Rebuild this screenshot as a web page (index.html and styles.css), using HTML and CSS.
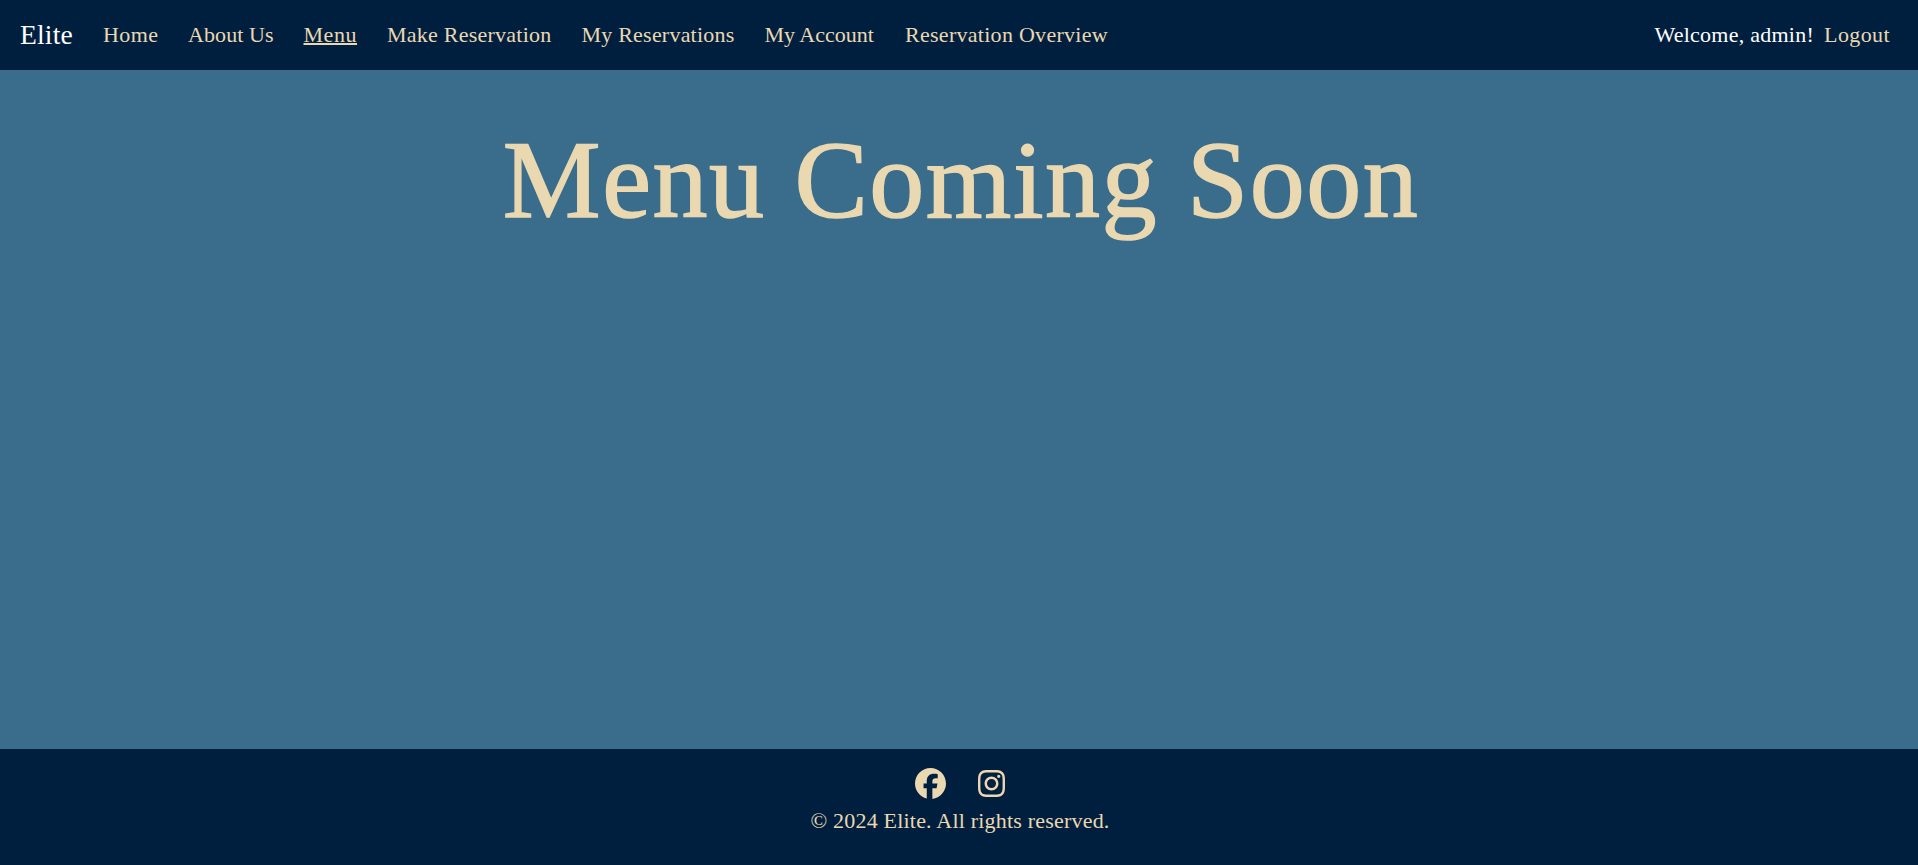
FILE: index.html
```html
<!DOCTYPE html>
<html lang="en">
<head>
<meta charset="utf-8">
<title>Elite - Menu</title>
<link rel="stylesheet" href="styles.css">
</head>
<body>
<header class="navbar">
  <a class="brand">Elite</a>
  <nav class="links">
    <a class="link home">Home</a>
    <a class="link about">About Us</a>
    <a class="link menu active">Menu</a>
    <a class="link make">Make Reservation</a>
    <a class="link mine">My Reservations</a>
    <a class="link account">My Account</a>
    <a class="link overview">Reservation Overview</a>
  </nav>
  <div class="user">
    <span class="welcome">Welcome, admin!</span>
    <a class="logout">Logout</a>
  </div>
</header>
<main class="content">
  <h1 class="title">Menu Coming Soon</h1>
</main>
<footer class="footer">
  <div class="social">
    <svg class="facebook" viewBox="0 0 512 512"><path d="M512 256C512 114.6 397.4 0 256 0S0 114.6 0 256C0 376 82.7 476.8 194.2 504.5V334.2H141.4V256h52.8V222.3c0-87.1 39.4-127.5 125-127.5c16.2 0 44.2 3.2 55.7 6.4V172c-6-.6-16.5-1-29.6-1c-42 0-58.2 15.9-58.2 57.2V256h83.6l-14.4 78.2H287V510.1C413.8 494.8 512 386.9 512 256z"/></svg>
    <svg class="instagram" viewBox="0 32 448 448"><path d="M224.1 141c-63.600 0-114.900 51.300-114.900 114.900s51.300 114.900 114.900 114.900S339 319.500 339 255.900 287.700 141 224.100 141zm0 189.600c-41.100 0-74.700-33.500-74.700-74.700s33.500-74.700 74.700-74.700 74.700 33.500 74.700 74.700-33.600 74.700-74.700 74.700zm146.400-194.300c0 14.900-12 26.800-26.800 26.800-14.900 0-26.800-12-26.800-26.800s12-26.800 26.800-26.800 26.800 12 26.800 26.800zm76.100 27.200c-1.700-35.900-9.900-67.700-36.200-93.900-26.200-26.200-58-34.400-93.900-36.200-37-2.100-147.900-2.100-184.900 0-35.800 1.700-67.600 9.900-93.900 36.100s-34.400 58-36.200 93.900c-2.100 37-2.100 147.900 0 184.900 1.700 35.900 9.900 67.700 36.200 93.900s58 34.400 93.900 36.200c37 2.100 147.900 2.100 184.900 0 35.900-1.700 67.700-9.900 93.900-36.200 26.200-26.200 34.400-58 36.200-93.900 2.100-37 2.100-147.800 0-184.800zM398.800 388c-7.800 19.600-22.900 34.700-42.600 42.600-29.500 11.700-99.500 9-132.100 9s-102.700 2.600-132.100-9c-19.600-7.800-34.700-22.900-42.600-42.600-11.700-29.500-9-99.500-9-132.100s-2.600-102.700 9-132.100c7.800-19.600 22.900-34.700 42.600-42.600 29.500-11.700 99.500-9 132.100-9s102.700-2.600 132.100 9c19.600 7.800 34.700 22.900 42.600 42.600 11.700 29.500 9 99.500 9 132.100s2.700 102.700-9 132.100z"/></svg>
  </div>
  <p class="copyright">© 2024 Elite. All rights reserved.</p>
</footer>
</body>
</html>
```
FILE: styles.css
```css
* { box-sizing: border-box; }
body {
  margin: 0;
  min-height: 100vh;
  display: flex;
  flex-direction: column;
  background: #3a6d8c;
  color: #ead8b1;
  font-family: "Liberation Serif", serif;
  font-size: 22px;
  line-height: 30px;
}
.navbar {
  height: 70px;
  flex: none;
  display: flex;
  align-items: center;
  padding: 0 28px 0 20px;
  background: #001f3f;
  white-space: nowrap;
}
.brand { width: 83px; color: #fff; font-size: 27.5px; letter-spacing: .2px; }
.links { display: flex; gap: 30px; }
.active { text-decoration: underline; text-decoration-thickness: 2px; text-underline-offset: 1px; }
.home { width: 55px; letter-spacing: .4px; }
.about { width: 85.5px; letter-spacing: .1px; }
.menu { width: 53.5px; letter-spacing: .55px; }
.make { width: 164.5px; letter-spacing: .24px; }
.mine { width: 153px; letter-spacing: .22px; }
.account { width: 110.5px; }
.overview { letter-spacing: .28px; }
.user { margin-left: auto; display: flex; gap: 10px; }
.welcome { color: #fff; letter-spacing: .25px; }
.logout { letter-spacing: .4px; }
.content { flex: 1; padding-top: 50px; }
.title {
  margin: 0;
  padding-left: 4px;
  text-align: center;
  font-size: 110px;
  font-weight: 400;
  line-height: 120px;
  letter-spacing: 1.5px;
  -webkit-text-stroke: 1.5px #ead8b1;
}
.footer {
  height: 116px;
  flex: none;
  padding: 19px 0 0 2px;
  background: #001f3f;
  text-align: center;
}
.social { height: 31px; display: flex; justify-content: center; align-items: center; gap: 32px; }
.social svg { fill: #ead8b1; }
.facebook { width: 31px; height: 31px; }
.instagram { width: 27px; height: 27px; }
.copyright { margin: 7px 0 0; letter-spacing: .2px; }
```
